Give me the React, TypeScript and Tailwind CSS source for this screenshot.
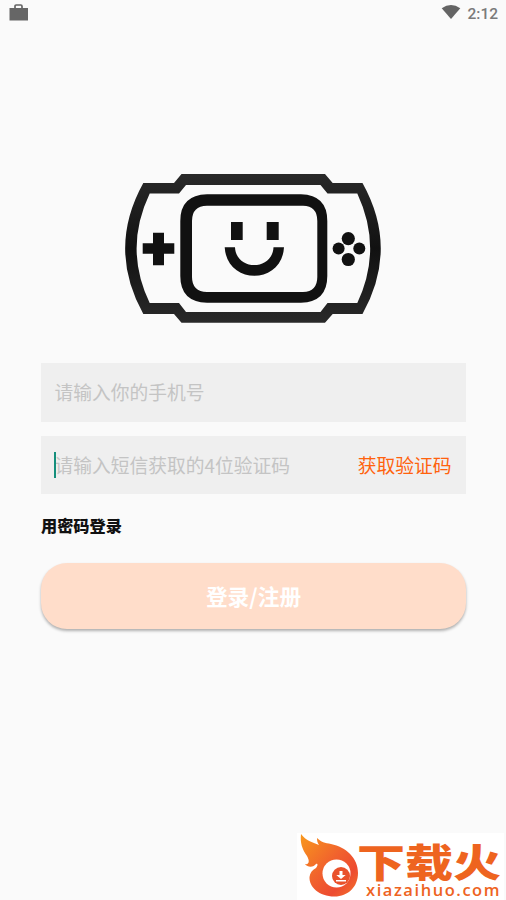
import React from "react";

const cjk = "font-['Noto_Sans_CJK_SC',sans-serif]";

function StatusBar() {
  return (
    <header className="flex h-[26px] items-center justify-between pl-[9px] pr-[8px]">
      <svg width="20" height="18" viewBox="0 0 20 18" className="-mt-[2px]">
        <path d="M.500 5h18.500v12.500H.500z" fill="#666" />
        <path d="M6 5V3.200Q6 2 7.200 2h4.600Q13 2 13 3.200V5" fill="none" stroke="#666" strokeWidth="1.700" />
      </svg>
      <div className="flex items-center gap-[6px]">
        <svg width="20" height="14" viewBox="0 0 20 14" className="-mt-[2px]">
          <path d="M.7 3.200Q10-3.200 19.300 3.200L10 14z" fill="#646464" />
        </svg>
        <span className="mt-px font-['Roboto',sans-serif] text-[15.500px] font-medium leading-[20px] text-[#7a7a7a]">2:12</span>
      </div>
    </header>
  );
}

function ConsoleLogo() {
  return (
    <svg width="258" height="150" viewBox="124 173 258 150" className="block">
      <defs>
        <linearGradient id="shell" x1="0" y1="174" x2="0" y2="323" gradientUnits="userSpaceOnUse">
          <stop offset="0" stopColor="#292929" />
          <stop offset=".5" stopColor="#111" />
          <stop offset="1" stopColor="#292929" />
        </linearGradient>
      </defs>
      <path
        fill="url(#shell)"
        fillRule="evenodd"
        d="M143.300 183H174L181.500 174H325L332.700 183H362.500Q399 248.500 362.500 314H332.700L325 322.700H181.500L174 314H143.300Q107 248.500 143.300 183ZM149.700 193.500Q123.500 248.500 149.700 303H179L186 312H320.500L327.500 303H357.300Q383 248.500 357.300 193.500H327.500L320.500 185H186L179 193.500Z"
      />
      <path
        fill="#111"
        fillRule="evenodd"
        d="M207 194.300H301Q327.300 195 327.300 221V276Q327.300 302 301 302.700H207Q180.300 302 180.300 276V221Q180.300 195 207 194.300ZM207 205.800Q192 206 192 221V277Q192 291.500 207 292H303Q317.300 291.500 317.300 277V221Q317.300 206 303 205.800Z"
      />
      <path d="M153 232.700h11v10.600h10.300v10.400H164v11.600h-11v-11.600h-10.300v-10.400H153z" fill="#111" />
      <path d="M231 222h11.700v18H231zM266.700 222h12v18h-12z" fill="#111" />
      <path d="M224.700 247.300H235C236 271 272.500 271 273.500 247.300H284C282 285.300 226.700 285.300 224.700 247.300Z" fill="#111" />
      <g fill="#111">
        <circle cx="348.300" cy="238.600" r="6.600" />
        <circle cx="348.300" cy="259.500" r="6.600" />
        <circle cx="338.600" cy="248.500" r="6" />
        <circle cx="359.300" cy="248.500" r="6" />
      </g>
    </svg>
  );
}

function Watermark() {
  return (
    <div className="flex h-[67px] w-[207px] bg-white">
      <svg width="62" height="67" viewBox="297 833 62 67" className="shrink-0">
        <defs>
          <linearGradient id="flame" x1="0" y1="0" x2="1" y2="1">
            <stop offset="0" stopColor="#f8981d" />
            <stop offset=".48" stopColor="#f1622d" />
            <stop offset=".75" stopColor="#ed4b30" />
            <stop offset="1" stopColor="#f4752a" />
          </linearGradient>
        </defs>
        <path
          fill="url(#flame)"
          d="M301 834C306 841 312 842 319 845C317 842 317 840 317 838C321 842 325 843 331 844C346 847 358 858 358 873C358 887 348 896.500 334.500 896.500C319 896.500 309 887 309.500 877C310 873 312 870 316 868C318 866 318 863 316 864C314 867 308 868 305 864C309 865 310 861 307 856C302 849 300 843 301 834Z"
        />
        <circle cx="336.500" cy="873.500" r="14" fill="#fff" />
        <circle cx="341" cy="876" r="9" fill="#e9512b" />
        <path d="M339.500 871h3v4h3.200l-4.700 4-4.700-4h3.200zM336 880h10v1.500h-10z" fill="#fff" />
      </svg>
      <div className="flex flex-col text-[#ee641f]">
        <div className="-ml-[2px] h-[48px] w-[147px]">
          <div className={`${cjk} origin-top-left scale-x-[1.230] whitespace-nowrap pt-[9px] text-[39px] font-black leading-[37px]`}>下载火</div>
        </div>
        <div className="pl-[7px] font-['Open_Sans',sans-serif] text-[16.500px] font-semibold leading-[17px] tracking-[1.550px]">xiazaihuo.com</div>
      </div>
    </div>
  );
}

export default function App() {
  return (
    <main className={`${cjk} flex h-[900px] w-[506px] flex-col overflow-hidden bg-[#fafafa]`}>
      <StatusBar />
      <div className="mt-[147px] flex h-[150px] pl-[124px]">
        <ConsoleLogo />
      </div>
      <section className="ml-[41px] mt-[40px] flex w-[425px] flex-col">
        <div className="flex h-[59px] items-center bg-[#efefef] pl-[13.500px] text-[18.750px] text-[#c4c4c4]">请输入你的手机号</div>
        <div className="relative mt-[14px] flex h-[58px] items-center justify-between bg-[#efefef] pl-[13.500px] pr-[14.500px] text-[18.750px]">
          <span className="text-[#c4c4c4]">请输入短信获取的4位验证码</span>
          <button className="text-[#ff620d]">获取验证码</button>
          <i className="absolute left-[13px] top-[16px] h-[26px] w-[2px] bg-[#158f7c]" />
        </div>
        <a className="mt-[19px] self-start text-[16.200px] font-black leading-[24px] text-[#111]">用密码登录</a>
        <button className="mt-[26px] h-[66px] rounded-[26px] bg-[#ffddca] text-[21.700px] font-bold text-white shadow-[0_2px_3px_rgba(0,0,0,0.3)]">登录/注册</button>
      </section>
      <footer className="mt-auto flex justify-end pr-[2px]">
        <Watermark />
      </footer>
    </main>
  );
}
